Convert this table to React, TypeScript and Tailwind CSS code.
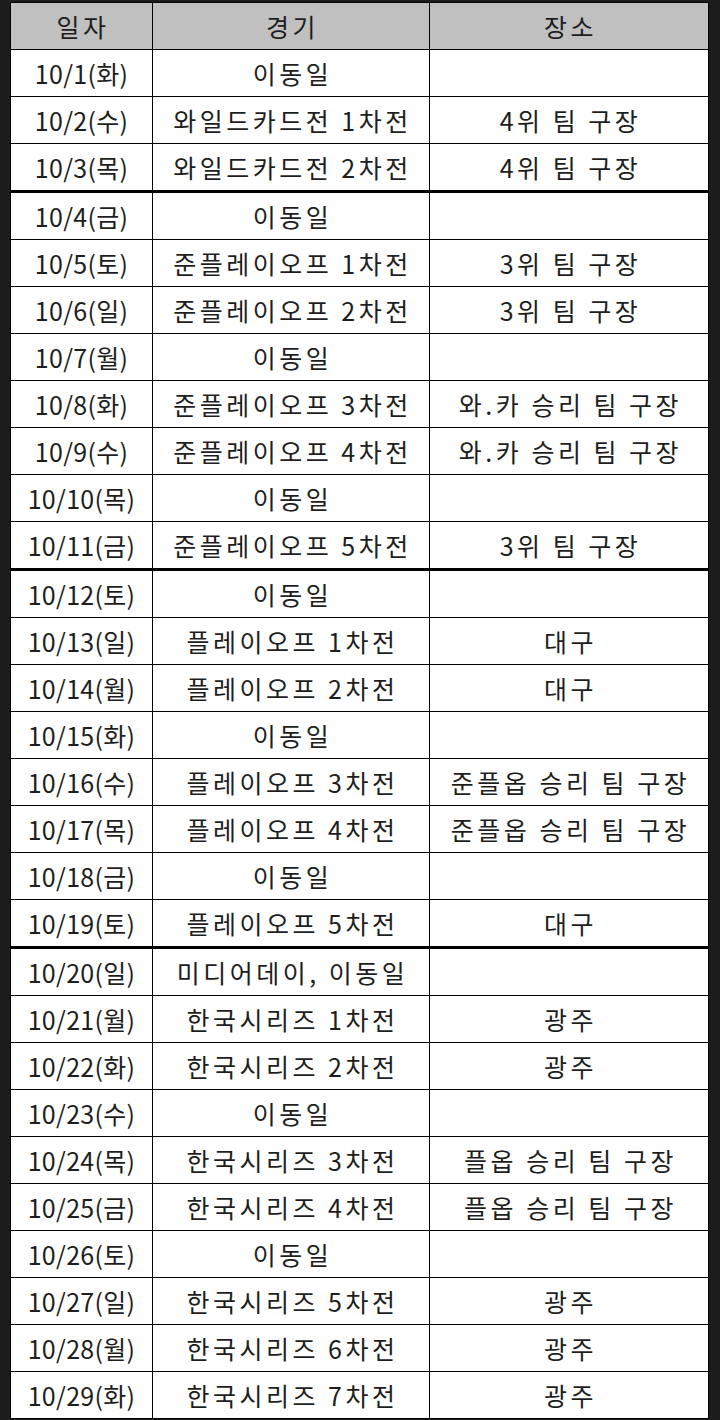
const rows: [string, string, string, boolean?][] = [
  ['10/1(화)', '이동일', ''],
  ['10/2(수)', '와일드카드전 1차전', '4위 팀 구장'],
  ['10/3(목)', '와일드카드전 2차전', '4위 팀 구장', true],
  ['10/4(금)', '이동일', ''],
  ['10/5(토)', '준플레이오프 1차전', '3위 팀 구장'],
  ['10/6(일)', '준플레이오프 2차전', '3위 팀 구장'],
  ['10/7(월)', '이동일', ''],
  ['10/8(화)', '준플레이오프 3차전', '와.카 승리 팀 구장'],
  ['10/9(수)', '준플레이오프 4차전', '와.카 승리 팀 구장'],
  ['10/10(목)', '이동일', ''],
  ['10/11(금)', '준플레이오프 5차전', '3위 팀 구장', true],
  ['10/12(토)', '이동일', ''],
  ['10/13(일)', '플레이오프 1차전', '대구'],
  ['10/14(월)', '플레이오프 2차전', '대구'],
  ['10/15(화)', '이동일', ''],
  ['10/16(수)', '플레이오프 3차전', '준플옵 승리 팀 구장'],
  ['10/17(목)', '플레이오프 4차전', '준플옵 승리 팀 구장'],
  ['10/18(금)', '이동일', ''],
  ['10/19(토)', '플레이오프 5차전', '대구', true],
  ['10/20(일)', '미디어데이, 이동일', ''],
  ['10/21(월)', '한국시리즈 1차전', '광주'],
  ['10/22(화)', '한국시리즈 2차전', '광주'],
  ['10/23(수)', '이동일', ''],
  ['10/24(목)', '한국시리즈 3차전', '플옵 승리 팀 구장'],
  ['10/25(금)', '한국시리즈 4차전', '플옵 승리 팀 구장'],
  ['10/26(토)', '이동일', ''],
  ['10/27(일)', '한국시리즈 5차전', '광주'],
  ['10/28(월)', '한국시리즈 6차전', '광주'],
  ['10/29(화)', '한국시리즈 7차전', '광주'],
];

const font = { fontFamily: '"Noto Sans CJK KR", "Noto Sans", sans-serif' };

function Row({ cells, thick, header }: { cells: string[]; thick?: boolean; header?: boolean }) {
  return (
    <div
      className={`grid grid-cols-[142px_277px_278px] h-[46px] box-content border-black ${
        thick ? 'border-b-[3px]' : 'border-b'
      } ${header ? 'bg-[#c0c0c0]' : 'bg-white'}`}
    >
      {cells.map((c, i) => (
        <div
          key={i}
          className={`flex items-center justify-center text-[25px] leading-none text-[#1e1e1e] whitespace-nowrap ${
            i < 2 ? 'border-r border-black' : ''
          } ${i === 0 && !header ? 'tracking-[0.3px]' : 'tracking-[3.5px] pl-[3px]'}`}
        >
          {c}
        </div>
      ))}
    </div>
  );
}

export default function App() {
  return (
    <div className="w-[720px] h-[1420px] overflow-hidden bg-[#1c1c1c] pt-[2px] pl-[10px]" style={font}>
      <div className="w-[699px] border-x border-t border-black bg-white">
        <Row cells={['일자', '경기', '장소']} header />
        {rows.map(([d, g, p, t]) => (
          <Row key={d} cells={[d, g, p]} thick={t} />
        ))}
      </div>
    </div>
  );
}
